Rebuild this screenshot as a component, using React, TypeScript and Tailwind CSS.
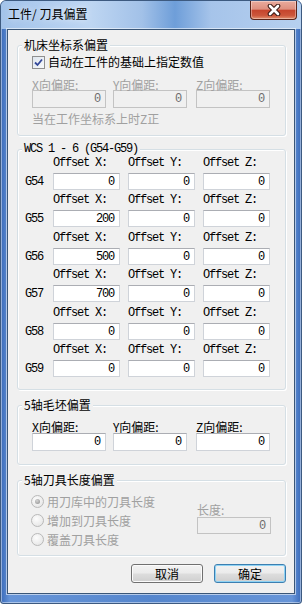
import React from "react";

const wcsRows = [
  { g: "G54", x: "0", y: "0", z: "0" },
  { g: "G55", x: "200", y: "0", z: "0" },
  { g: "G56", x: "500", y: "0", z: "0" },
  { g: "G57", x: "700", y: "0", z: "0" },
  { g: "G58", x: "0", y: "0", z: "0" },
  { g: "G59", x: "0", y: "0", z: "0" },
];

// row pitch alternates 37 / 38 px
const rowGap = ["mb-[3px]", "mb-[4px]", "mb-[3px]", "mb-[4px]", "mb-[3px]", "mb-0"];

const mono = "font-['Liberation_Mono',monospace] text-[12px] tracking-[-1.2px]";

function TextBox({ value, disabled = false, className = "" }: { value: string; disabled?: boolean; className?: string }) {
  return (
    <div
      className={`flex items-center justify-end pr-[5px] border leading-none ${mono} ${
        disabled
          ? "bg-[#f0f0f0] border-[#c3c3c3] text-[#6d6d6d]"
          : "bg-white border-[#cfd3d9] border-t-[#abadb3] text-black"
      } ${className}`}
    >
      {value}
    </div>
  );
}

function Group({ title, titleMono = false, className = "", children }: { title: string; titleMono?: boolean; className?: string; children: React.ReactNode }) {
  return (
    <div className={`relative ml-[9px] w-[269px] border border-[#d5dfe5] rounded-[3px] shadow-[inset_1px_1px_0_#fff,1px_1px_0_#fff] ${className}`}>
      <span className={`absolute left-[4px] top-[-8px] px-[2px] bg-[#f0f0f0] leading-[14px] text-black ${titleMono ? mono : ""}`}>
        {title}
      </span>
      {children}
    </div>
  );
}

function Radio({ checked = false }: { checked?: boolean }) {
  return (
    <span className="w-[13px] h-[13px] rounded-full border border-[#b9b9b9] bg-[radial-gradient(circle_at_40%_35%,#fdfdfd,#e1e1e1)] flex items-center justify-center">
      {checked && <span className="w-[5px] h-[5px] rounded-full bg-[radial-gradient(circle_at_40%_35%,#d4d4d4,#8c8c8c)]" />}
    </span>
  );
}

function Btn({ label, focused = false }: { label: string; focused?: boolean }) {
  return (
    <button
      className={`w-[72px] h-[19px] rounded-[3px] border text-[12px] leading-none text-black bg-[linear-gradient(180deg,#f2f2f2_0%,#ebebeb_48%,#dddddd_52%,#cfcfcf_100%)] ${
        focused ? "border-[#3c7fb1] shadow-[inset_0_0_0_1px_#8fd3f4]" : "border-[#707070] shadow-[inset_0_0_0_1px_#fbfbfb]"
      }`}
    >
      {label}
    </button>
  );
}

function CloseButton() {
  return (
    <div className="w-[47px] h-[19px] flex items-center justify-center rounded-b-[4px] border border-t-0 border-[#5a2419] bg-[linear-gradient(180deg,#e9ab9d_0%,#de907f_45%,#c6452d_52%,#cc563b_80%,#e2906f_100%)] shadow-[inset_0_0_0_1px_rgba(255,255,255,0.35)]">
      <svg width="14" height="12" viewBox="0 0 14 12">
        <path d="M3 2 L11 10 M11 2 L3 10" stroke="#3b1a14" strokeWidth="4.6" strokeLinecap="round" />
        <path d="M3 2 L11 10 M11 2 L3 10" stroke="#ffffff" strokeWidth="2.6" strokeLinecap="round" />
      </svg>
    </div>
  );
}

export default function App() {
  return (
    <div className="min-h-screen bg-white font-['Noto_Sans_CJK_SC',sans-serif] text-[12px] text-black">
      <div className="w-[302px] h-[604px] flex flex-col border border-[#3d5a80] rounded-t-[6px] rounded-b-[3px] overflow-hidden bg-[linear-gradient(90deg,#3a6bba,#6795d8_3%,#5586cd_50%,#6795d8_97%,#3a6bba)] shadow-[inset_0_0_0_1px_rgba(255,255,255,0.45)]">
        {/* Title bar */}
        <div className="h-[28px] flex items-start justify-between pl-[7px] pr-[4px] bg-[linear-gradient(90deg,#a3c3ea_0%,#bed6f2_30%,#a2c1e8_47%,#6e9ed9_58%,#a6c4ea_70%,#b6d0ef_100%)]">
          <span className="mt-[6px] leading-[14px] [text-shadow:0_0_6px_rgba(255,255,255,0.9)]">工件/ 刀具偏置</span>
          <CloseButton />
        </div>

        {/* Client area */}
        <div className="mx-[6px] h-[565px] flex flex-col border border-[#3a5677] bg-[#f0f0f0] shadow-[0_0_0_1px_rgba(255,255,255,0.55)]">
          {/* Machine coordinate offset */}
          <Group title="机床坐标系偏置" className="mt-[15px] h-[91px]">
            <div className="pt-[9px] pl-[14px] flex items-center h-[23px]">
              <span className="w-[13px] h-[13px] border border-[#8f8f8f] bg-[linear-gradient(135deg,#dfe6ee,#f7f9fb)] flex items-center justify-center">
                <svg width="9" height="9" viewBox="0 0 9 9">
                  <path d="M1 4.5 L3.5 7 L8 1.5" fill="none" stroke="#34489a" strokeWidth="1.8" />
                </svg>
              </span>
              <span className="ml-[3px] leading-[14px]">自动在工件的基础上指定数值</span>
            </div>
            <div className="flex mt-[10px] pl-[14px] text-[#a0a0a0]">
              <div className="w-[74px]">
                <div className="leading-[11px]">X向偏距:</div>
                <TextBox value="0" disabled className="h-[18px]" />
              </div>
              <div className="ml-[7px] w-[74px]">
                <div className="leading-[11px]">Y向偏距:</div>
                <TextBox value="0" disabled className="h-[18px]" />
              </div>
              <div className="ml-[9px] w-[74px]">
                <div className="leading-[11px]">Z向偏距:</div>
                <TextBox value="0" disabled className="h-[18px]" />
              </div>
            </div>
            <div className="mt-[4px] pl-[14px] leading-[14px] text-[#a0a0a0]">当在工作坐标系上时Z正</div>
          </Group>

          {/* WCS */}
          <Group title="WCS 1 - 6 (G54-G59)" titleMono className="mt-[13px] h-[241px] pt-[6px]">
            {wcsRows.map((r, i) => (
              <div key={r.g} className={rowGap[i]}>
                <div className={`flex pl-[35px] leading-[14px] ${mono}`}>
                  <span className="w-[67px]">Offset X:</span>
                  <span className="ml-[8px] w-[67px]">Offset Y:</span>
                  <span className="ml-[8px] w-[67px]">Offset Z:</span>
                </div>
                <div className="flex items-center mt-[3px] h-[17px]">
                  <span className={`w-[35px] pl-[7px] ${mono}`}>{r.g}</span>
                  <TextBox value={r.x} className="w-[67px] h-[17px]" />
                  <TextBox value={r.y} className="ml-[8px] w-[67px] h-[17px]" />
                  <TextBox value={r.z} className="ml-[8px] w-[67px] h-[17px]" />
                </div>
              </div>
            ))}
          </Group>

          {/* 5-axis stock offset */}
          <Group title="5轴毛坯偏置" className="mt-[15px] h-[60px] pt-[15px]">
            <div className="flex pl-[14px]">
              <div className="w-[74px]">
                <div className="leading-[12px]">X向偏距:</div>
                <TextBox value="0" className="h-[18px]" />
              </div>
              <div className="ml-[7px] w-[74px]">
                <div className="leading-[12px]">Y向偏距:</div>
                <TextBox value="0" className="h-[18px]" />
              </div>
              <div className="ml-[9px] w-[74px]">
                <div className="leading-[12px]">Z向偏距:</div>
                <TextBox value="0" className="h-[18px]" />
              </div>
            </div>
          </Group>

          {/* 5-axis tool length offset */}
          <Group title="5轴刀具长度偏置" className="mt-[15px] h-[76px]">
            <div className="flex pl-[13px] text-[#a0a0a0]">
              <div className="flex-1 pt-[11px]">
                {[
                  { label: "用刀库中的刀具长度", checked: true },
                  { label: "增加到刀具长度", checked: false },
                  { label: "覆盖刀具长度", checked: false },
                ].map((o) => (
                  <div key={o.label} className="h-[19px] flex items-center">
                    <Radio checked={o.checked} />
                    <span className="ml-[3px] leading-[14px]">{o.label}</span>
                  </div>
                ))}
              </div>
              <div className="w-[74px] mr-[14px] pt-[23px]">
                <div className="leading-[12px]">长度:</div>
                <TextBox value="0" disabled className="mt-[1px] h-[17px]" />
              </div>
            </div>
          </Group>

          {/* Buttons */}
          <div className="mt-[8px] flex justify-end gap-[11px] pr-[8px]">
            <Btn label="取消" />
            <Btn label="确定" focused />
          </div>
        </div>
      </div>
    </div>
  );
}
